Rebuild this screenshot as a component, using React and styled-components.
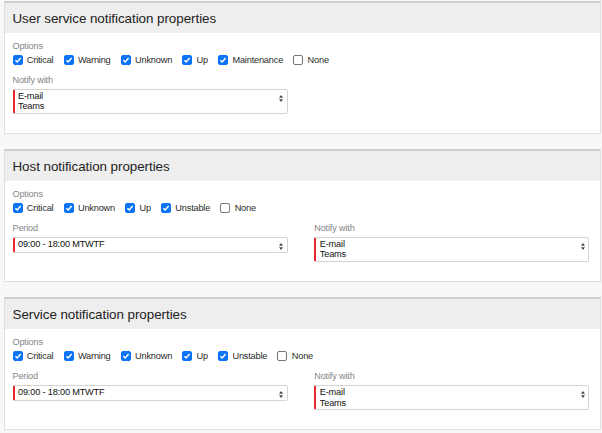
import React from 'react'
import styled, { createGlobalStyle } from 'styled-components'

const GlobalStyle = createGlobalStyle`
  html, body {
    margin: 0;
    padding: 0;
    background: #f8f8f8;
    font-family: "Liberation Sans", Arial, sans-serif;
  }
`

const Page = styled.div`
  display: flex;
  flex-direction: column;
  gap: 15px;
  padding: 1px 1px 0 4px;
`

const Card = styled.section`
  background: #fff;
  border: 1px solid #e0e0e0;
  border-top: 2px solid #cfcfd4;
`

const CardHeader = styled.header`
  height: 30px;
  display: flex;
  align-items: center;
  padding: 0 7.5px;
  background: #eeeeee;
  font-size: 13.4px;
  letter-spacing: -0.05px;
  color: #222;
`

const CardBody = styled.div`
  padding: 8px 0 19px 7.5px;
`

const Label = styled.div`
  font-size: 9.1px;
  letter-spacing: -0.15px;
  line-height: 10px;
  color: #858585;
  margin-bottom: ${(p) => p.$gap || 4}px;
`

const Options = styled.div`
  display: flex;
  align-items: center;
  height: 12px;
  gap: 10.2px;
  margin-bottom: 9px;
`

const Option = styled.label`
  display: flex;
  align-items: center;
  gap: 4.3px;
  font-size: 9.2px;
  letter-spacing: -0.18px;
  color: #2a2a2a;
`

const Box = styled.span`
  width: 10px;
  height: 10px;
  box-sizing: border-box;
  border-radius: 2px;
  display: flex;
  align-items: center;
  justify-content: center;
  background: ${(p) => (p.$checked ? '#0b73f5' : '#fff')};
  border: 1px solid ${(p) => (p.$checked ? '#0b73f5' : '#767676')};
`

const Fields = styled.div`
  display: grid;
  grid-template-columns: ${(p) => (p.$cols === 2 ? '275px 275px' : '275px')};
  column-gap: 26.8px;
`

const Select = styled.div`
  display: flex;
  box-sizing: border-box;
  min-height: 16px;
  padding: 0.7px 0 1px 3.5px;
  border: 1px solid #d4d4d4;
  border-left: 2px solid #e8262b;
  border-radius: 2px;
  background: #fff;
`

const Values = styled.div`
  flex: 1;
  font-size: 9.2px;
  letter-spacing: -0.18px;
  line-height: 10.7px;
  color: #111;
`

const Arrows = styled.svg`
  flex: none;
  margin: 4px 3.7px 0 0;
`

const Checkbox = ({ label, checked = true }) => (
  <Option>
    <Box $checked={checked}>
      {checked && (
        <svg width="8" height="8" viewBox="0 0 8 8">
          <path d="M1.4 4.2 L3.2 6 L6.6 2" fill="none" stroke="#fff" strokeWidth="1.5" />
        </svg>
      )}
    </Box>
    {label}
  </Option>
)

const Field = ({ label, values }) => (
  <div>
    <Label>{label}</Label>
    <Select>
      <Values>
        {values.map((v) => (
          <div key={v}>{v}</div>
        ))}
      </Values>
      <Arrows width="4" height="7" viewBox="0 0 4 7">
        <path d="M2 0 L4 2.8 L0 2.8 Z M0 4.2 L4 4.2 L2 7 Z" fill="#444" />
      </Arrows>
    </Select>
  </div>
)

const sections = [
  {
    title: 'User service notification properties',
    options: ['Critical', 'Warning', 'Unknown', 'Up', 'Maintenance'],
    fields: [{ label: 'Notify with', values: ['E-mail', 'Teams'] }],
  },
  {
    title: 'Host notification properties',
    options: ['Critical', 'Unknown', 'Up', 'Unstable'],
    fields: [
      { label: 'Period', values: ['09:00 - 18:00 MTWTF'] },
      { label: 'Notify with', values: ['E-mail', 'Teams'] },
    ],
  },
  {
    title: 'Service notification properties',
    options: ['Critical', 'Warning', 'Unknown', 'Up', 'Unstable'],
    fields: [
      { label: 'Period', values: ['09:00 - 18:00 MTWTF'] },
      { label: 'Notify with', values: ['E-mail', 'Teams'] },
    ],
  },
]

const App = () => {
  return (
    <>
      <GlobalStyle />
      <Page>
        {sections.map((s) => (
          <Card key={s.title}>
            <CardHeader>{s.title}</CardHeader>
            <CardBody>
              <Label $gap={3}>Options</Label>
              <Options>
                {s.options.map((o) => (
                  <Checkbox key={o} label={o} />
                ))}
                <Checkbox label="None" checked={false} />
              </Options>
              <Fields $cols={s.fields.length}>
                {s.fields.map((f) => (
                  <Field key={f.label} label={f.label} values={f.values} />
                ))}
              </Fields>
            </CardBody>
          </Card>
        ))}
      </Page>
    </>
  )
}

export default App
